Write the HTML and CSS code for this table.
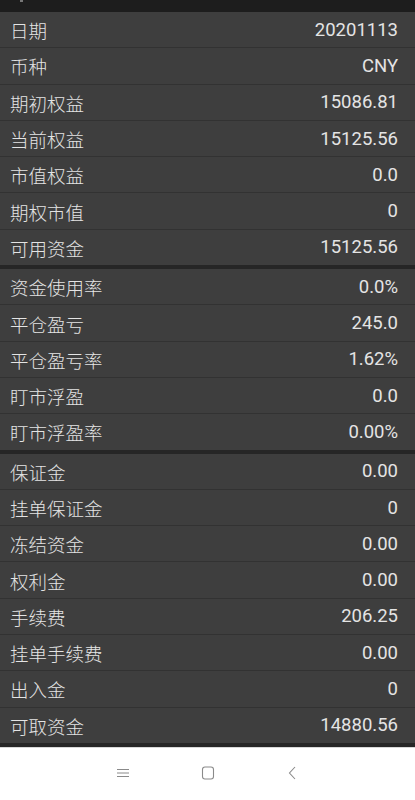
FILE: index.html
```html
<!DOCTYPE html>
<html>
<head>
   <meta charset="utf-8">
   <title>资金详情</title>
   <link rel="stylesheet" href="styles.css">
</head>
<body>
   <div class="topbar"><span class="back-tip"></span></div>

   <div class="group">
       <div class="row"><span class="label">日期</span><span class="value">20201113</span></div>
       <div class="row"><span class="label">币种</span><span class="value">CNY</span></div>
       <div class="row"><span class="label">期初权益</span><span class="value">15086.81</span></div>
       <div class="row"><span class="label">当前权益</span><span class="value">15125.56</span></div>
       <div class="row"><span class="label">市值权益</span><span class="value">0.0</span></div>
       <div class="row"><span class="label">期权市值</span><span class="value">0</span></div>
       <div class="row"><span class="label">可用资金</span><span class="value">15125.56</span></div>
   </div>

   <div class="group">
       <div class="row"><span class="label">资金使用率</span><span class="value">0.0%</span></div>
       <div class="row"><span class="label">平仓盈亏</span><span class="value">245.0</span></div>
       <div class="row"><span class="label">平仓盈亏率</span><span class="value">1.62%</span></div>
       <div class="row"><span class="label">盯市浮盈</span><span class="value">0.0</span></div>
       <div class="row"><span class="label">盯市浮盈率</span><span class="value">0.00%</span></div>
   </div>

   <div class="group">
       <div class="row"><span class="label">保证金</span><span class="value">0.00</span></div>
       <div class="row"><span class="label">挂单保证金</span><span class="value">0</span></div>
       <div class="row"><span class="label">冻结资金</span><span class="value">0.00</span></div>
       <div class="row"><span class="label">权利金</span><span class="value">0.00</span></div>
       <div class="row"><span class="label">手续费</span><span class="value">206.25</span></div>
       <div class="row"><span class="label">挂单手续费</span><span class="value">0.00</span></div>
       <div class="row"><span class="label">出入金</span><span class="value">0</span></div>
       <div class="row"><span class="label">可取资金</span><span class="value">14880.56</span></div>
   </div>

   <div class="navbar">
       <svg class="nav-icon" width="16" height="16" viewBox="0 0 16 16">
           <path d="M2 4.5h12M2 8h12M2 11.5h12" stroke="#8a8a8a" stroke-width="1" fill="none"/>
       </svg>
       <svg class="nav-icon" width="16" height="16" viewBox="0 0 16 16">
           <rect x="2.5" y="2" width="11" height="12" rx="2.5" stroke="#8a8a8a" stroke-width="1.1" fill="none"/>
       </svg>
       <svg class="nav-icon" width="16" height="16" viewBox="0 0 16 16">
           <path d="M10 2L4.5 8l5.5 6" stroke="#8a8a8a" stroke-width="1.1" fill="none"/>
       </svg>
   </div>
</body>
</html>
```

FILE: styles.css
```css
body {
    margin: 0;
    background-color: #ffffff;
    font-family: Roboto, "Noto Sans CJK SC", sans-serif;
    color: #e4e4e4;
}
.topbar {
    height: 12px;
    background-color: #1d1d1d;
    position: relative;
}
.back-tip {
    position: absolute;
    left: 20px;
    top: 0;
    width: 3px;
    height: 2px;
    background-color: #777;
}
.group {
    background-color: #3e3e3e;
    border-bottom: 4px solid #262626;
}
.row {
    box-sizing: border-box;
    height: 36.3px;
    display: flex;
    align-items: center;
    justify-content: space-between;
    padding: 0 17px 0 10px;
    border-bottom: 1px solid #323232;
    font-size: 18.5px;
}
.row:last-child {
    border-bottom: none;
    height: 35.3px;
}
.label {
    padding-top: 1px;
    font-weight: 300;
}
.value {
    font-family: Roboto, sans-serif;
    font-weight: 400;
}
.navbar {
    height: 50px;
    border-top: 1px solid #d8d8d8;
    background-color: #ffffff;
    display: flex;
    justify-content: center;
    align-items: center;
    gap: 69px;
}
```
